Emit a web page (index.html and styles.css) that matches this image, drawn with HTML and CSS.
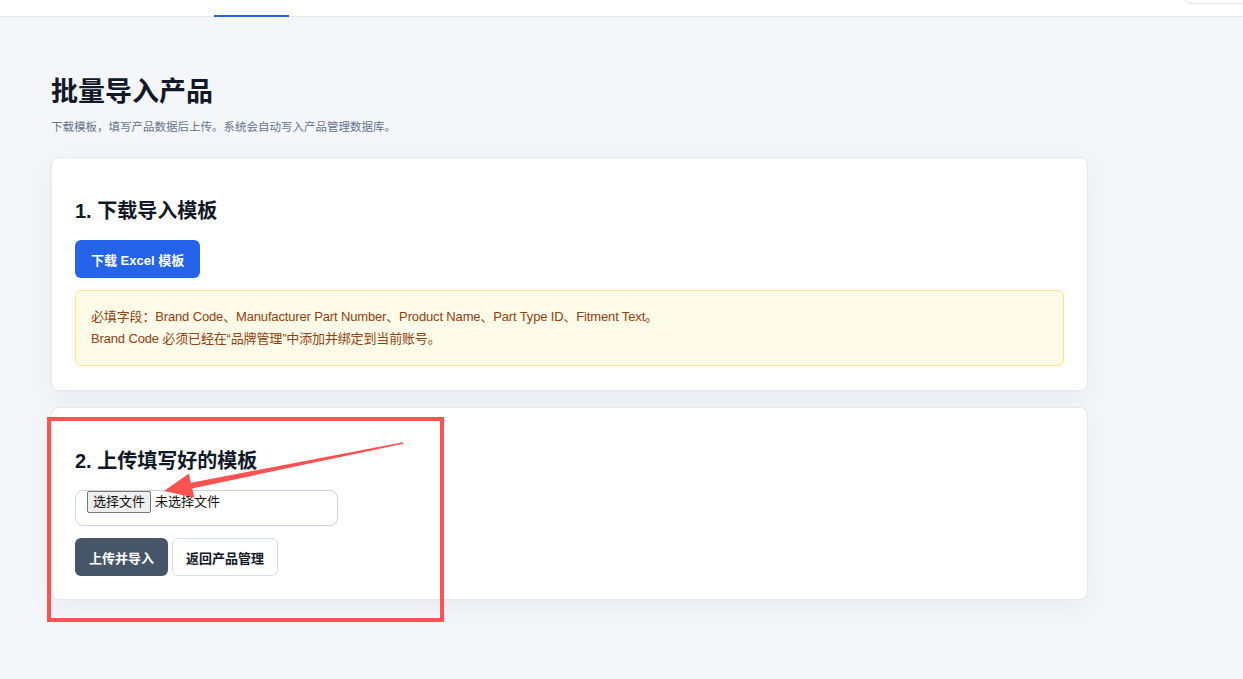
FILE: index.html
```html
<!DOCTYPE html>
<html lang="zh-CN">
<head>
<meta charset="utf-8">
<title>批量导入产品</title>
<link rel="stylesheet" href="styles.css">
</head>
<body>
<header class="topbar">
  <span class="tab-active"></span>
  <span class="top-btn"></span>
</header>
<main class="page">
  <h1 class="title">批量导入产品</h1>
  <p class="subtitle">下载模板，填写产品数据后上传。系统会自动写入产品管理数据库。</p>

  <section class="card">
    <h2 class="card-title">1. 下载导入模板</h2>
    <button class="btn btn-primary">下载 Excel 模板</button>
    <div class="alert">
      <div>必填字段：Brand Code、Manufacturer Part Number、Product Name、Part Type ID、Fitment Text。</div>
      <div>Brand Code 必须已经在“品牌管理”中添加并绑定到当前账号。</div>
    </div>
  </section>

  <section class="card card-second">
    <h2 class="card-title">2. 上传填写好的模板</h2>
    <div class="file-field">
      <label class="file-btn">选择文件<input type="file" class="file-hidden"></label>
      <span class="file-name">未选择文件</span>
    </div>
    <div class="actions">
      <button class="btn btn-dark">上传并导入</button>
      <button class="btn btn-outline">返回产品管理</button>
    </div>
  </section>
</main>

<svg class="annotation" width="1243" height="679" viewBox="0 0 1243 679">
  <rect x="49" y="419" width="393" height="201" fill="none" stroke="#fd5252" stroke-width="4"/>
  <polygon fill="#fd5252" points="164,491 189,473.5 190.8,482.8 403,442.3 403.3,443.7 192.2,488.4 194.5,497.8"/>
</svg>
</body>
</html>
```

FILE: styles.css
```css
* { box-sizing: border-box; }

html, body {
  margin: 0;
  padding: 0;
}

body {
  background: #f5f6fa;
  font-family: "Liberation Sans", "Noto Sans CJK SC", sans-serif;
  color: #111827;
  width: 1243px;
  height: 679px;
  overflow: hidden;
  position: relative;
}

.topbar {
  height: 17px;
  background: #ffffff;
  border-bottom: 1px solid #e5e7eb;
  display: flex;
  align-items: flex-end;
}

.tab-active {
  position: relative;
  z-index: 1;
  margin-left: 214px;
  width: 75px;
  height: 2px;
  margin-bottom: -1px;
  background: #2563eb;
}

.top-btn {
  margin-left: auto;
  margin-right: -20px;
  margin-bottom: 12px;
  width: 78px;
  height: 30px;
  flex-shrink: 0;
  border: 1px solid #dfe3ea;
  border-radius: 6px;
  background: #ffffff;
}

.page {
  padding: 58px 0 0 51px;
  width: 1088px;
}

.title {
  margin: 0;
  font-size: 27px;
  line-height: 34px;
  font-weight: 700;
  color: #111827;
}

.subtitle {
  margin: 9px 0 0;
  font-size: 11.5px;
  line-height: 18px;
  color: #64748b;
}

.card {
  margin-top: 21px;
  background: #ffffff;
  border: 1px solid #e2e8f0;
  border-radius: 8px;
  padding: 24px 23px 24px 23px;
  box-shadow: 0 8px 24px rgba(15, 23, 42, 0.05);
}

.card-second {
  margin-top: 16px;
  padding-bottom: 23px;
}

.card-title {
  margin: 15px 0;
  font-size: 20px;
  line-height: 28px;
  font-weight: 700;
  color: #111827;
}

.btn {
  height: 38px;
  padding: 0 13px;
  border-radius: 6px;
  border: 1px solid transparent;
  font-family: inherit;
  font-size: 13px;
  font-weight: 700;
  cursor: pointer;
}

.btn-primary {
  background: #2563eb;
  color: #ffffff;
  padding: 0 15px;
}

.btn-dark {
  background: #475569;
  color: #ffffff;
}

.btn-outline {
  background: #ffffff;
  color: #111827;
  border-color: #d6dde8;
}

.alert {
  margin-top: 12px;
  background: #fefbe8;
  border: 1px solid #fde68a;
  border-radius: 6px;
  padding: 15px 15px;
  font-size: 13px;
  line-height: 22px;
  color: #92400e;
  letter-spacing: -0.15px;
}

.file-field {
  width: 263px;
  height: 36px;
  border: 1px solid #cbd5e1;
  border-radius: 8px;
  padding: 0 11px;
  display: flex;
  align-items: flex-start;
  gap: 4px;
  font-size: 13px;
  color: #111111;
}

.file-btn {
  display: inline-block;
  height: 22px;
  line-height: 20px;
  padding: 0 5px;
  background: #efefef;
  border: 1px solid #767676;
  border-radius: 2px;
  color: #111111;
  cursor: pointer;
}

.file-hidden {
  display: none;
}

.file-name {
  line-height: 22px;
}

.actions {
  margin-top: 12px;
  display: flex;
  gap: 4px;
}

.annotation {
  position: absolute;
  left: 0;
  top: 0;
  pointer-events: none;
}
```
